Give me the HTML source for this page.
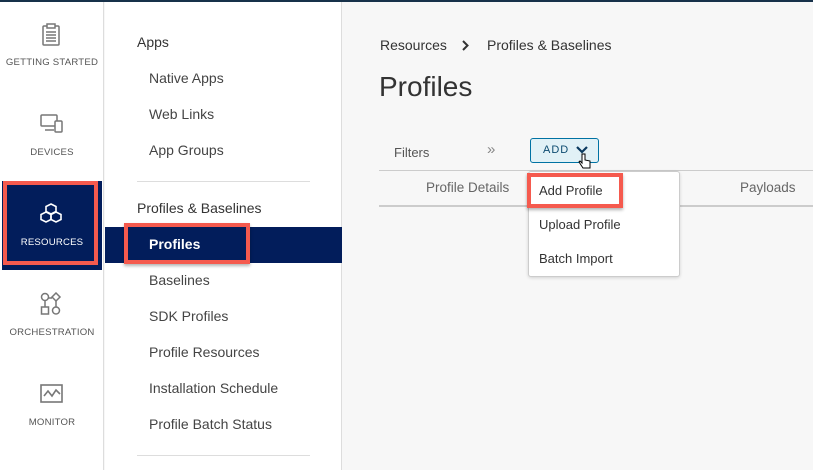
<!DOCTYPE html>
<html><head><style>
*{margin:0;padding:0;box-sizing:border-box}
body{width:813px;height:470px;overflow:hidden;font-family:"Liberation Sans",sans-serif;background:#f7f7f7;position:relative}
.a{position:absolute}
.nav{left:0;top:0;width:104px;height:470px;background:#fff;border-right:1px solid #ddd}
.nl{width:104px;text-align:center;font-size:9.6px;color:#555;letter-spacing:.2px}
.sub{left:105px;top:0;width:237px;height:470px;background:#fff;border-right:1px solid #ddd}
.si{font-size:14px;color:#444;left:149px}
.sh{font-size:14px;color:#333;left:137px}
</style></head><body>
<div class="a" style="left:0;top:0;width:813px;height:2px;background:#17314a;z-index:5"></div>
<div class="a nav"></div>
<div class="a sub"></div>
<svg class="a" style="top:23px;left:40px" width="22" height="24" viewBox="0 0 22 24" fill="none" stroke="#777" stroke-width="1.5"><rect x="3" y="3" width="16" height="19" rx="1"/><rect x="7" y="1" width="8" height="4" fill="#fff"/><path d="M6 9h10M6 12h10M6 15h10M6 18h10"/></svg>
<div class="a nl" style="top:57px">GETTING STARTED</div>
<svg class="a" style="left:40px;top:113px" width="24" height="22" viewBox="0 0 24 22" fill="none" stroke="#777" stroke-width="1.5"><rect x="1" y="2" width="16" height="11" rx="1"/><path d="M5 17h9"/><rect x="15" y="8" width="7" height="11" rx="1" fill="#fff"/></svg>
<div class="a nl" style="top:147px">DEVICES</div>
<div class="a" style="left:2px;top:181px;width:100px;height:89px;background:#021d5b"></div>
<div class="a" style="left:3px;top:181px;width:95px;height:84px;border:4px solid #f55a4e"></div>
<svg class="a" style="left:39px;top:202px" width="24" height="24" viewBox="0 0 24 24" fill="none" stroke="#fff" stroke-width="1.6"><path d="M12 2l5 2.5v5L12 12 7 9.5v-5z"/><path d="M7 10l5 2.5v5L7 20 2 17.5v-5z"/><path d="M17 10l5 2.5v5L17 20l-5-2.5v-5z"/></svg>
<div class="a nl" style="top:237px;color:#fff">RESOURCES</div>
<svg class="a" style="left:40px;top:292px" width="22" height="24" viewBox="0 0 22 24" fill="none" stroke="#777" stroke-width="1.5"><circle cx="5" cy="5" r="3.5"/><path d="M16 1l4 4-4 4-4-4z"/><rect x="1.5" y="15" width="7" height="7"/><circle cx="16" cy="18.5" r="3.5"/><path d="M5 9v6M16 9v6M8 6h4"/></svg>
<div class="a nl" style="top:327px">ORCHESTRATION</div>
<svg class="a" style="left:40px;top:384px" width="24" height="20" viewBox="0 0 24 20" fill="none" stroke="#777" stroke-width="1.6"><rect x="1" y="1" width="21" height="17"/><path d="M4 12l4-5 4 5 4-6 4 4"/></svg>
<div class="a nl" style="top:417px">MONITOR</div>
<div class="a sh" style="top:34px">Apps</div>
<div class="a si" style="top:70px">Native Apps</div>
<div class="a si" style="top:106px">Web Links</div>
<div class="a si" style="top:142px">App Groups</div>
<div class="a" style="left:137px;top:181px;width:173px;height:1px;background:#ddd"></div>
<div class="a sh" style="top:200px">Profiles &amp; Baselines</div>
<div class="a" style="left:105px;top:227px;width:237px;height:36px;background:#021d5b"></div>
<div class="a" style="left:124px;top:223px;width:126px;height:41px;border:4px solid #f55a4e;box-shadow:0 2px 3px rgba(0,0,0,.3)"></div>
<div class="a si" style="top:236px;color:#fff;font-weight:bold">Profiles</div>
<div class="a si" style="top:272px">Baselines</div>
<div class="a si" style="top:308px">SDK Profiles</div>
<div class="a si" style="top:344px">Profile Resources</div>
<div class="a si" style="top:380px">Installation Schedule</div>
<div class="a si" style="top:416px">Profile Batch Status</div>
<div class="a" style="left:137px;top:455px;width:173px;height:1px;background:#ddd"></div>
<div class="a" style="left:380px;top:37px;font-size:14px;color:#333">Resources</div>
<svg class="a" style="left:461px;top:40px" width="9" height="11" viewBox="0 0 9 11" fill="none" stroke="#333" stroke-width="2"><path d="M2 1l4.5 4.5L2 10"/></svg>
<div class="a" style="left:487px;top:37px;font-size:14px;color:#333">Profiles &amp; Baselines</div>
<div class="a" style="left:379px;top:71px;font-size:28px;color:#333">Profiles</div>
<div class="a" style="left:394px;top:145px;font-size:13px;color:#555">Filters</div>
<div class="a" style="left:487px;top:141px;font-size:15px;color:#888">»</div>
<div class="a" style="left:530px;top:138px;width:69px;height:25px;border:1px solid #0072a3;border-radius:3px;background:#e1f1f6"></div>
<div class="a" style="left:543px;top:144px;font-size:11px;color:#0b4a6f;letter-spacing:1px">ADD</div>
<svg class="a" style="left:576px;top:146px" width="12" height="9" viewBox="0 0 12 9" fill="none" stroke="#0b3a5f" stroke-width="2.2"><path d="M1 1l5 5 5-5"/></svg>
<svg class="a" style="left:578px;top:153px" width="14" height="17" viewBox="0 0 14 17"><path d="M4 1v9l-2-2-1 1 4 6h7v-7l-5-1V1z" fill="#fff" stroke="#000" stroke-width="1"/></svg>
<div class="a" style="left:379px;top:170px;width:434px;height:1px;background:#ccc"></div>
<div class="a" style="left:426px;top:180px;font-size:13.5px;color:#666">Profile Details</div>
<div class="a" style="left:740px;top:180px;font-size:13.5px;color:#666">Payloads</div>
<div class="a" style="left:379px;top:205px;width:434px;height:2px;background:#ccc"></div>
<div class="a" style="left:528px;top:171px;width:152px;height:106px;background:#fff;border:1px solid #ccc;border-radius:3px;box-shadow:0 1px 3px rgba(0,0,0,.15)"></div>
<div class="a" style="left:527px;top:173px;width:96px;height:35px;border:4px solid #f55a4e;box-shadow:0 2px 3px rgba(0,0,0,.3)"></div>
<div class="a" style="left:539px;top:183px;font-size:13px;color:#333">Add Profile</div>
<div class="a" style="left:539px;top:217px;font-size:13px;color:#333">Upload Profile</div>
<div class="a" style="left:539px;top:251px;font-size:13px;color:#333">Batch Import</div>
</body></html>
